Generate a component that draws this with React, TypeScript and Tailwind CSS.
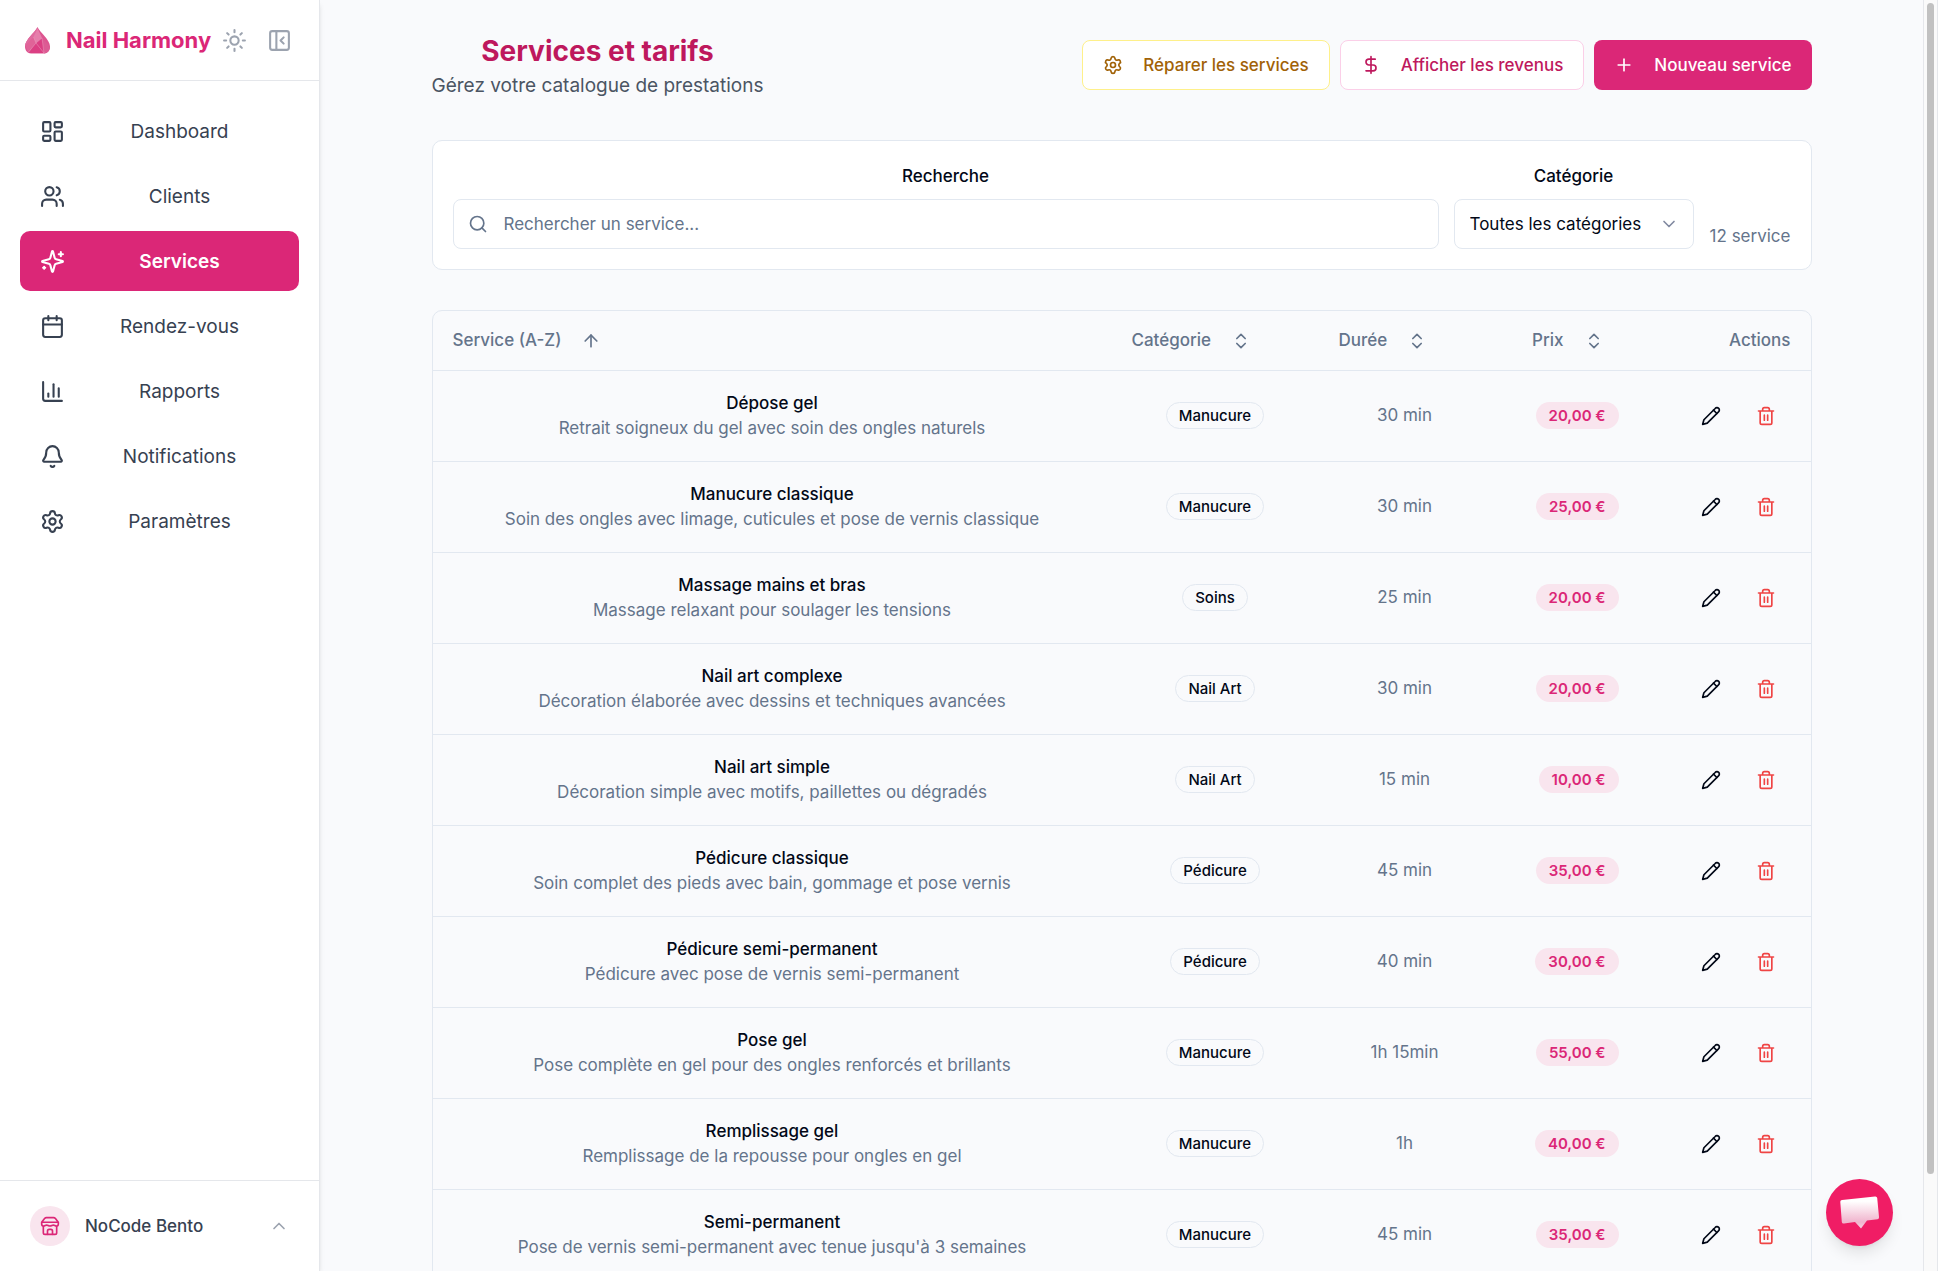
import React from "react";
import {
  ArrowUp, Bell, Calendar, ChartColumn, ChevronDown, ChevronUp, ChevronsUpDown, DollarSign,
  LayoutDashboard, Plus, Search, Settings, Sun, Users,
} from "lucide-react";

type IconProps = { className?: string; strokeWidth?: number };

function Stroke({ className, children }: { className?: string; children: React.ReactNode }) {
  return (
    <svg viewBox="0 0 24 24" fill="none" stroke="currentColor" strokeWidth="2" strokeLinecap="round" strokeLinejoin="round" className={className} aria-hidden="true">
      {children}
    </svg>
  );
}

const SparklesIcon = ({ className }: IconProps) => (
  <Stroke className={className}>
    <path d="M9.937 15.5A2 2 0 0 0 8.5 14.063l-6.135-1.582a.5.5 0 0 1 0-.962L8.5 9.936A2 2 0 0 0 9.937 8.5l1.582-6.135a.5.5 0 0 1 .963 0L14.063 8.5A2 2 0 0 0 15.5 9.937l6.135 1.581a.5.5 0 0 1 0 .964L15.5 14.063a2 2 0 0 0-1.437 1.437l-1.582 6.135a.5.5 0 0 1-.963 0z" />
    <path d="M20 3v4M22 5h-4M4 17v2M5 18H3" />
  </Stroke>
);

const PanelIcon = ({ className }: IconProps) => (
  <Stroke className={className}>
    <rect x="3" y="3" width="18" height="18" rx="2" />
    <path d="M9 3v18M16 15l-3-3 3-3" />
  </Stroke>
);

const PencilIcon = ({ className }: IconProps) => (
  <Stroke className={className}>
    <path d="M17 3a2.85 2.83 0 1 1 4 4L7.5 20.5 2 22l1.5-5.5Z" />
    <path d="m15 5 4 4" />
  </Stroke>
);

const TrashIcon = ({ className }: IconProps) => (
  <Stroke className={className}>
    <path d="M3 6h18M19 6v14c0 1-1 2-2 2H7c-1 0-2-1-2-2V6M8 6V4c0-1 1-2 2-2h4c1 0 2 1 2 2v2M10 11v6M14 11v6" />
  </Stroke>
);

const StoreIcon = ({ className }: IconProps) => (
  <Stroke className={className}>
    <path d="M2 7.500 5.500 3A3 3 0 0 1 8 2h8a3 3 0 0 1 2.500 1L22 7.500M2 7.500h20v2a2.500 2.500 0 0 1-2.500 2.500c-1.500 0-2-1-3.500-1s-2 1-4 1-2.500-1-4-1-2 1-3.500 1A2.500 2.500 0 0 1 2 9.500zM4 12v8a2 2 0 0 0 2 2h12a2 2 0 0 0 2-2v-8" />
    <path d="M9 22v-4a2 2 0 0 1 2-2h2a2 2 0 0 1 2 2v4" />
  </Stroke>
);

function DropLogo({ className }: IconProps) {
  return (
    <svg viewBox="0 0 25 27" className={className} aria-hidden="true">
      <path d="M12.5 0C14.500 5 25 12.500 25 19.500c0 4-2.500 7-6 7H6c-3.500 0-6-3-6-7C0 12.500 10.500 5 12.500 0Z" fill="#dd5590" />
      <path d="M12.500 0C10.500 5 0 12.500 0 19.500L9 10Z" fill="#e06b9f" />
      <path d="M12.500 1 8.500 10 3 20l8-4 6-5Z" fill="#e67fac" />
      <path d="M8.500 10 .300 18.500 3 25l8-9Z" fill="#e06398" />
      <path d="M17 11 25 19.500c0 4-2.500 7-6 7Z" fill="#dc5c94" />
      <path d="M11 16 4 26h15L17 11Z" fill="#db3f83" />
      <path d="M11 16 3 25.500M11 16l8 10M11 16l6-5M17 11l2 15M8.500 10 11 16" stroke="#eb9dbf" strokeWidth=".5" fill="none" />
    </svg>
  );
}

const nav = [
  { label: "Dashboard", Icon: LayoutDashboard },
  { label: "Clients", Icon: Users },
  { label: "Services", Icon: SparklesIcon, active: true },
  { label: "Rendez-vous", Icon: Calendar },
  { label: "Rapports", Icon: ChartColumn },
  { label: "Notifications", Icon: Bell },
  { label: "Paramètres", Icon: Settings },
];

const services = [
  ["Dépose gel", "Retrait soigneux du gel avec soin des ongles naturels", "Manucure", "30 min", "20,00 €"],
  ["Manucure classique", "Soin des ongles avec limage, cuticules et pose de vernis classique", "Manucure", "30 min", "25,00 €"],
  ["Massage mains et bras", "Massage relaxant pour soulager les tensions", "Soins", "25 min", "20,00 €"],
  ["Nail art complexe", "Décoration élaborée avec dessins et techniques avancées", "Nail Art", "30 min", "20,00 €"],
  ["Nail art simple", "Décoration simple avec motifs, paillettes ou dégradés", "Nail Art", "15 min", "10,00 €"],
  ["Pédicure classique", "Soin complet des pieds avec bain, gommage et pose vernis", "Pédicure", "45 min", "35,00 €"],
  ["Pédicure semi-permanent", "Pédicure avec pose de vernis semi-permanent", "Pédicure", "40 min", "30,00 €"],
  ["Pose gel", "Pose complète en gel pour des ongles renforcés et brillants", "Manucure", "1h 15min", "55,00 €"],
  ["Remplissage gel", "Remplissage de la repousse pour ongles en gel", "Manucure", "1h", "40,00 €"],
  ["Semi-permanent", "Pose de vernis semi-permanent avec tenue jusqu'à 3 semaines", "Manucure", "45 min", "35,00 €"],
];

function Sidebar() {
  return (
    <aside className="z-10 flex w-80 shrink-0 flex-col border-r border-[#e5e7eb] bg-white shadow-md">
      <div className="flex h-[81px] items-center border-b border-[#e5e7eb] pl-[25px] pr-[27px]">
        <DropLogo className="h-[27px] w-[25px] shrink-0" />
        <span className="ml-4 flex-1 whitespace-nowrap text-[22px] font-bold leading-8 text-[#db2777]">Nail Harmony</span>
        <button aria-label="Changer de thème" className="mr-5 text-[#9ca3af]"><Sun className="size-[25px]" /></button>
        <button aria-label="Réduire le menu" className="text-[#9ca3af]"><PanelIcon className="size-[25px]" /></button>
      </div>
      <nav className="flex flex-1 flex-col gap-[5px] p-5">
        {nav.map(({ label, Icon, active }) => (
          <a
            key={label}
            href="#"
            aria-current={active ? "page" : undefined}
            className={
              active
                ? "flex h-[60px] items-center gap-[15px] rounded-[10px] bg-[#db2777] px-5 text-[19px] font-semibold text-white"
                : "flex h-[60px] items-center gap-[15px] rounded-[10px] px-5 text-[19px] text-[#374151]"
            }
          >
            <Icon className="size-[25px] shrink-0" />
            <span className="flex-1 text-center">{label}</span>
          </a>
        ))}
      </nav>
      <div className="border-t border-[#e5e7eb] px-[30px] py-[25px]">
        <button className="flex w-full items-center">
          <span className="flex size-10 items-center justify-center rounded-full bg-[#f9e5ee] text-[#db2777]"><StoreIcon className="size-5" /></span>
          <span className="ml-[15px] flex-1 text-left text-[17px] font-medium leading-[26px] text-[#374151]">NoCode Bento</span>
          <ChevronUp className="size-5 text-[#9ca3af]" />
        </button>
      </div>
    </aside>
  );
}

function Sortable({ label }: { label: string }) {
  return (
    <button className="inline-flex items-center gap-5 align-middle font-medium">
      {label}
      <ChevronsUpDown className="size-5" />
    </button>
  );
}

export default function App() {
  return (
    <div className="flex h-screen overflow-hidden bg-[#f9fafc] font-['Inter','Noto_Sans',sans-serif] text-[17px] leading-[25px] text-[#020817]">
      <Sidebar />
      <main className="min-w-0 flex-1 overflow-hidden">
        <div className="mx-auto max-w-[1440px] px-[30px] pt-[30px]">
          <header className="flex items-start justify-between">
            <div className="text-center">
              <h1 className="text-[28px] font-bold leading-[42px] text-[#be185d]">Services et tarifs</h1>
              <p className="text-[19px] leading-7 text-[#4b5563]">Gérez votre catalogue de prestations</p>
            </div>
            <div className="mt-[10px] flex gap-[10px] font-medium leading-[26px]">
              <button className="flex h-[50px] items-center gap-5 rounded-lg border border-[#fef08a] bg-white px-5 text-[#a16207]"><Settings className="size-5" />Réparer les services</button>
              <button className="flex h-[50px] items-center gap-5 rounded-lg border border-[#fbcfe8] bg-white px-5 text-[#be185d]"><DollarSign className="size-5" />Afficher les revenus</button>
              <button className="flex h-[50px] items-center gap-5 rounded-lg bg-[#db2777] px-5 text-white"><Plus className="size-5" />Nouveau service</button>
            </div>
          </header>

          <section className="mt-10 flex items-end gap-[15px] rounded-[10px] border border-[#e2e8f0] bg-white p-5">
            <div className="flex-1">
              <label htmlFor="search" className="mb-2 block text-center font-medium leading-[30px]">Recherche</label>
              <div className="relative">
                <Search className="absolute left-[15px] top-[15px] size-5 text-[#64748b]" />
                <input id="search" type="text" placeholder="Rechercher un service..." className="block h-[50px] w-full rounded-lg border border-[#e2e8f0] bg-white pl-[50px] pr-4 placeholder:text-[#64748b]" />
              </div>
            </div>
            <div className="w-60 shrink-0">
              <label htmlFor="category" className="mb-2 block text-center font-medium leading-[30px]">Catégorie</label>
              <div className="relative">
                <select id="category" className="block h-[50px] w-full appearance-none rounded-lg border border-[#e2e8f0] bg-white pl-[15px] pr-10">
                  <option>Toutes les catégories</option>
                </select>
                <ChevronDown className="pointer-events-none absolute right-[15px] top-[15px] size-5 text-[#8189a0]" />
              </div>
            </div>
            <span className="w-[82px] shrink-0 whitespace-nowrap text-right text-[#64748b]">12 service</span>
          </section>

          <div className="mt-10 rounded-[10px] border border-[#e2e8f0]">
            <table className="w-full table-fixed border-collapse">
              <colgroup>
                <col />
                <col className="w-[207px]" />
                <col className="w-[172px]" />
                <col className="w-[148px]" />
                <col className="w-[172px]" />
              </colgroup>
              <thead className="text-[#64748b]">
                <tr className="h-[59px] border-b border-[#e2e8f0]">
                  <th className="px-5 text-left font-medium">
                    <button className="inline-flex items-center gap-5 align-middle font-medium">Service (A-Z)<ArrowUp className="size-5" /></button>
                  </th>
                  <th className="px-5 text-left"><Sortable label="Catégorie" /></th>
                  <th className="px-5 text-left"><Sortable label="Durée" /></th>
                  <th className="pr-[35px] text-right"><Sortable label="Prix" /></th>
                  <th className="px-5 text-right font-medium">Actions</th>
                </tr>
              </thead>
              <tbody>
                {services.map(([name, description, category, duration, price]) => (
                  <tr key={name} className="border-b border-[#e2e8f0]">
                    <td className="p-5 text-center">
                      <div className="font-medium">{name}</div>
                      <div className="text-[#64748b]">{description}</div>
                    </td>
                    <td className="px-5 text-center">
                      <span className="inline-flex h-[27px] items-center rounded-full border border-[#e2e8f0] px-3 align-middle text-[15px] font-medium">{category}</span>
                    </td>
                    <td className="px-5 text-center text-[#64748b]">{duration}</td>
                    <td className="px-5 text-right">
                      <span className="inline-flex h-[27px] items-center rounded-full bg-[#f9e5ee] px-[13px] align-middle text-[15px] font-semibold text-[#db2777]">{price}</span>
                    </td>
                    <td className="px-5">
                      <div className="flex justify-end gap-[5px]">
                        <button aria-label={`Modifier ${name}`} className="flex size-[50px] items-center justify-center"><PencilIcon className="size-5" /></button>
                        <button aria-label={`Supprimer ${name}`} className="flex size-[50px] items-center justify-center text-[#ef4444]"><TrashIcon className="size-5" /></button>
                      </div>
                    </td>
                  </tr>
                ))}
              </tbody>
            </table>
          </div>
        </div>
      </main>
      <div className="w-[15px] shrink-0 border-x border-[#e5e7eb] bg-[#fafafa] px-[3px]" aria-hidden="true">
        <div className="mt-[3px] h-[1171px] rounded-full bg-[#c1c1c1]" />
      </div>
      <button aria-label="Ouvrir la messagerie" className="fixed bottom-[25px] right-[45px] z-20 flex size-[67px] items-center justify-center rounded-full bg-[#f01d65] shadow-lg">
        <svg viewBox="0 0 39 33" className="h-[33px] w-[39px]" aria-hidden="true">
          <defs>
            <linearGradient id="bubble" x1="0" y1="0" x2="0" y2="1">
              <stop offset=".15" stopColor="#fff" />
              <stop offset=".8" stopColor="#f0b4cd" />
              <stop offset="1" stopColor="#f6d3e1" />
            </linearGradient>
          </defs>
          <path d="M2 4 35 .500q2-.200 2.200 1.500L39 21q.100 2-1.500 2.200L27 24.500l-6 8-6-6.500-11 1.500q-2 .200-2.200-1.500L.300 6Q.200 4.200 2 4Z" fill="url(#bubble)" />
        </svg>
      </button>
    </div>
  );
}
